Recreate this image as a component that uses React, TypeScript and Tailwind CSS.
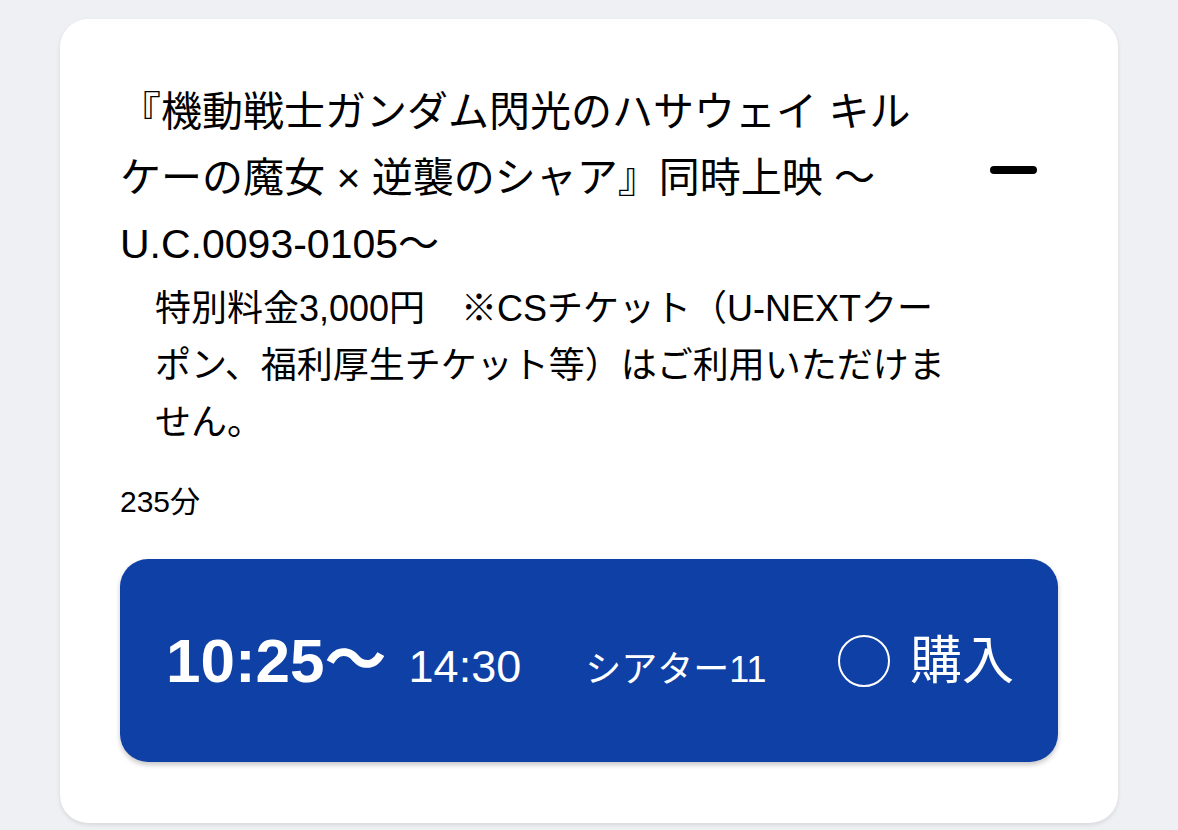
export default function App() {
  return (
    <div
      className="min-h-[830px] w-full bg-[#eff0f3] px-[60px] pt-[19px] text-black"
      style={{ fontFamily: '"Liberation Sans", "Noto Sans CJK JP", sans-serif' }}
    >
      <div className="rounded-[28px] bg-white px-[60px] pb-[61px] pt-[60px] shadow-[0_2px_4px_rgba(0,0,0,0.10)]">
        {/* Title row with collapse control */}
        <div className="flex items-center justify-between">
          <h2 className="w-[805px] text-[41px] font-normal leading-[66px]">
            『機動戦士ガンダム閃光のハサウェイ キルケーの魔女 × 逆襲のシャア』同時上映 〜U.C.0093-0105〜
          </h2>
          <button
            type="button"
            aria-label="閉じる"
            className="mb-[16px] mr-[21px] h-[8px] w-[47px] rounded-full bg-black"
          />
        </div>

        <p className="mt-[3px] w-[838px] pl-[35px] text-[36px] leading-[57px]">
          特別料金3,000円　※CSチケット（U-NEXTクーポン、福利厚生チケット等）はご利用いただけません。
        </p>

        {/* Runtime */}
        <div className="mt-[31px] text-[30px] leading-[40px]">235分</div>

        {/* Showtime button */}
        <div className="mt-[37px] flex h-[203px] items-center rounded-[28px] bg-[#0f40a6] pl-[46px] pr-[44px] text-white shadow-[0_3px_5px_rgba(0,0,0,0.22)]">
          <div className="flex items-baseline">
            <span className="text-[62px] font-bold leading-none">10:25〜</span>
            <span className="ml-[22px] text-[45px] leading-none">14:30</span>
            <span className="ml-[64px] text-[36px] leading-none">シアター11</span>
          </div>
          <div className="ml-auto flex items-center">
            <span className="h-[52px] w-[52px] rounded-full border-2 border-white" />
            <span className="ml-[20px] text-[52px] leading-none">購入</span>
          </div>
        </div>
      </div>
    </div>
  );
}
